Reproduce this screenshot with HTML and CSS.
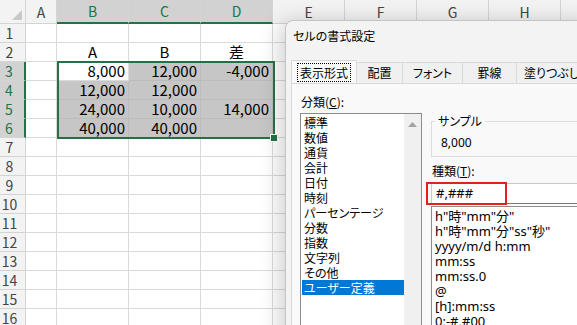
FILE: index.html
```html
<!DOCTYPE html>
<html lang="ja">
<head>
    <meta charset="UTF-8">
    <title>セルの書式設定</title>
    <link rel="stylesheet" href="styles.css">
</head>
<body>
<div class="sheet">
    <table class="grid">
        <colgroup><col class="c-row"><col class="c-a"><col class="c-std" span="8"></colgroup>
        <thead>
            <tr>
                <th class="corner"><svg width="10" height="10" viewBox="0 0 10 10"><polygon points="10,0 10,10 0,10" fill="#c9c9c9"/></svg></th>
                <th>A</th><th class="sel">B</th><th class="sel">C</th><th class="sel">D</th><th>E</th><th>F</th><th>G</th><th>H</th><th></th>
            </tr>
        </thead>
        <tbody>
            <tr><th>1</th><td></td><td></td><td></td><td></td><td></td></tr>
            <tr><th>2</th><td></td><td class="c">A</td><td class="c">B</td><td class="c">差</td><td></td></tr>
            <tr><th class="sel">3</th><td></td><td class="num">8,000</td><td class="num in">12,000</td><td class="num in">-4,000</td><td></td></tr>
            <tr><th class="sel">4</th><td></td><td class="num in">12,000</td><td class="num in">12,000</td><td class="num in"></td><td></td></tr>
            <tr><th class="sel">5</th><td></td><td class="num in">24,000</td><td class="num in">10,000</td><td class="num in">14,000</td><td></td></tr>
            <tr><th class="sel">6</th><td></td><td class="num in">40,000</td><td class="num in">40,000</td><td class="num in"></td><td></td></tr>
            <tr><th>7</th><td></td><td></td><td></td><td></td><td></td></tr>
            <tr><th>8</th><td></td><td></td><td></td><td></td><td></td></tr>
            <tr><th>9</th><td></td><td></td><td></td><td></td><td></td></tr>
            <tr><th>10</th><td></td><td></td><td></td><td></td><td></td></tr>
            <tr><th>11</th><td></td><td></td><td></td><td></td><td></td></tr>
            <tr><th>12</th><td></td><td></td><td></td><td></td><td></td></tr>
            <tr><th>13</th><td></td><td></td><td></td><td></td><td></td></tr>
            <tr><th>14</th><td></td><td></td><td></td><td></td><td></td></tr>
            <tr><th>15</th><td></td><td></td><td></td><td></td><td></td></tr>
            <tr><th>16</th><td></td><td></td><td></td><td></td><td></td></tr>
        </tbody>
    </table>

    <!-- selected range B3:D6 -->
    <div class="selection"><span class="fill-handle"></span></div>

    <div class="dialog">
        <div class="dlg-title">セルの書式設定</div>
        <div class="tabs">
            <div class="tab active"><span class="focus">表示形式</span></div>
            <div class="tab w46">配置</div>
            <div class="tab w60">フォント</div>
            <div class="tab w54">罫線</div>
            <div class="tab w70">塗りつぶし</div>
        </div>
        <div class="pane">
            <div class="col-left">
                <div class="label">分類(<u>C</u>):</div>
                <div class="listbox">
                    <ul class="items">
                        <li>標準</li>
                        <li>数値</li>
                        <li>通貨</li>
                        <li>会計</li>
                        <li>日付</li>
                        <li>時刻</li>
                        <li>パーセンテージ</li>
                        <li>分数</li>
                        <li>指数</li>
                        <li>文字列</li>
                        <li>その他</li>
                        <li class="selected">ユーザー定義</li>
                    </ul>
                    <div class="vscroll"><svg width="9" height="5" viewBox="0 0 9 5"><polygon points="4.5,0 9,5 0,5" fill="#a3a3a3"/></svg></div>
                </div>
            </div>
            <div class="col-right">
                <fieldset class="sample">
                    <legend>サンプル</legend>
                    <div class="sample-value">8,000</div>
                </fieldset>
                <div class="label type-label">種類(<u>T</u>):</div>
                <div class="type-input"><span>#,###</span><span class="mark"></span></div>
                <ul class="formats">
                    <li>h"時"mm"分"</li>
                    <li>h"時"mm"分"ss"秒"</li>
                    <li>yyyy/m/d h:mm</li>
                    <li>mm:ss</li>
                    <li>mm:ss.0</li>
                    <li>@</li>
                    <li>[h]:mm:ss</li>
                    <li>0;-#,#00</li>
                </ul>
            </div>
        </div>
    </div>
</div>
</body>
</html>
```

FILE: styles.css
```css
body { margin: 0; width: 577px; height: 325px; overflow: hidden; background: #fff; font-family: "Noto Sans CJK JP", sans-serif; }
.sheet { position: relative; width: 577px; height: 325px; overflow: hidden; }

/* worksheet */
.grid { table-layout: fixed; width: 633px; border-collapse: separate; border-spacing: 0; }
.grid col.c-row { width: 26px; }
.grid col.c-a { width: 31px; }
.grid col.c-std { width: 72px; }
.grid th, .grid td { box-sizing: border-box; height: 19px; padding: 0; border-right: 1px solid #dadada; border-bottom: 1px solid #dadada; line-height: 18px; font-weight: normal; white-space: nowrap; }
.grid thead th { height: 24px; line-height: 22px; background: #f3f3f3; color: #444; font-size: 14px; border-color: #d4d4d4; text-align: center; }
.grid thead th.sel { background: #d2d2d2; color: #217346; border-bottom: 2px solid #217346; }
.grid .corner { vertical-align: bottom; text-align: right; }
.grid .corner svg { display: block; margin: 0 3px 3px auto; }
.grid tbody th { background: #f3f3f3; color: #444; font-size: 14px; text-align: center; padding-right: 6px; border-color: #d4d4d4; }
.grid tbody th.sel { background: #d2d2d2; color: #217346; border-right: 2px solid #217346; }
.grid td { font-size: 15px; color: #000; }
.grid td.num { text-align: right; padding-right: 3px; }
.grid td.in { background: #c6c6c6; border-color: #bcbcbc; }
.grid td.c { text-align: center; }

.selection { position: absolute; left: 57px; top: 61px; width: 218px; height: 78px; box-sizing: border-box; border: 2px solid #217346; }
.fill-handle { position: absolute; right: -5px; bottom: -5px; width: 6px; height: 6px; background: #217346; border: 1px solid #fff; }

/* dialog */
.dialog { position: absolute; left: 285px; top: 20px; width: 310px; height: 400px; display: flex; flex-direction: column; background: #f3f3f3; border: 1px solid #c4c4c4; border-radius: 8px 0 0 0; box-shadow: -4px 2px 22px rgba(0, 0, 0, 0.2); font-size: 12px; font-feature-settings: "palt"; color: #000; }
.dlg-title { flex: none; height: 39px; padding: 6px 0 0 7px; box-sizing: border-box; line-height: 17px; }
.tabs { flex: none; display: flex; align-items: flex-end; height: 23px; margin-left: 5px; }
.tab { box-sizing: border-box; height: 21px; line-height: 19px; text-align: center; background: #f0f0f0; border: 1px solid #d9d9d9; border-left: none; border-bottom: none; }
.tab.active { width: 66px; height: 23px; padding-top: 2px; background: #f9f9f9; border-left: 1px solid #d9d9d9; }
.tab .focus { display: inline-block; padding: 0 2px; line-height: 17px; outline: 1px dotted #000; }
.w46 { width: 46px; }
.w60 { width: 60px; }
.w54 { width: 54px; }
.w70 { width: 70px; }

.pane { flex: 1; margin-left: 5px; display: grid; grid-template-columns: 122px 1fr; align-items: start; column-gap: 9px; padding: 9px 0 0 8px; background: #f9f9f9; border: 1px solid #d9d9d9; border-right: none; }
.label { line-height: 17px; padding-left: 1px; }
.label u { text-decoration-thickness: 1px; }
.col-left .label { margin-bottom: 3px; }

.listbox { display: flex; height: 240px; border: 1px solid #8c8c8c; background: #fff; }
.items { flex: 1; margin: 0; padding: 1px 0 0 1px; list-style: none; }
.items li { height: 15px; line-height: 15px; padding-left: 2px; }
.items li.selected { background: #0078d7; color: #fff; }
.vscroll { width: 17px; background: #f0f0f0; display: flex; justify-content: center; padding-top: 8px; box-sizing: border-box; }
.vscroll svg { display: block; }

.sample { margin: 20px 0 0; padding: 0; min-width: 0; border: 1px solid #dcdcdc; }
.sample legend { margin-left: 3px; padding: 0 3px; line-height: 16px; }
.sample-value { margin-top: 6px; padding: 0 0 5px 9px; line-height: 16px; font-family: "Noto Sans", "Noto Sans CJK JP", sans-serif; }
.type-label { margin-top: 5px; }
.type-input { position: relative; height: 21px; margin-top: 4px; box-sizing: border-box; border: 1px solid #c8c8c8; border-bottom-color: #7a7a7a; background: #fff; padding-left: 4px; line-height: 19px; font-size: 13px; font-family: "Noto Sans", "Noto Sans CJK JP", sans-serif; }
.type-input .mark { position: absolute; left: -6px; top: -2px; width: 81px; height: 23px; box-sizing: border-box; border: 2px solid #e4201c; }
.formats { margin: 2px 0 0; padding: 2px 0 0 3px; height: 160px; list-style: none; background: #fff; border: 1px solid #8c8c8c; border-right: none; font-size: 13px; font-family: "Noto Sans", "Noto Sans CJK JP", sans-serif; }
.formats li { height: 15px; line-height: 15px; white-space: nowrap; }
```
